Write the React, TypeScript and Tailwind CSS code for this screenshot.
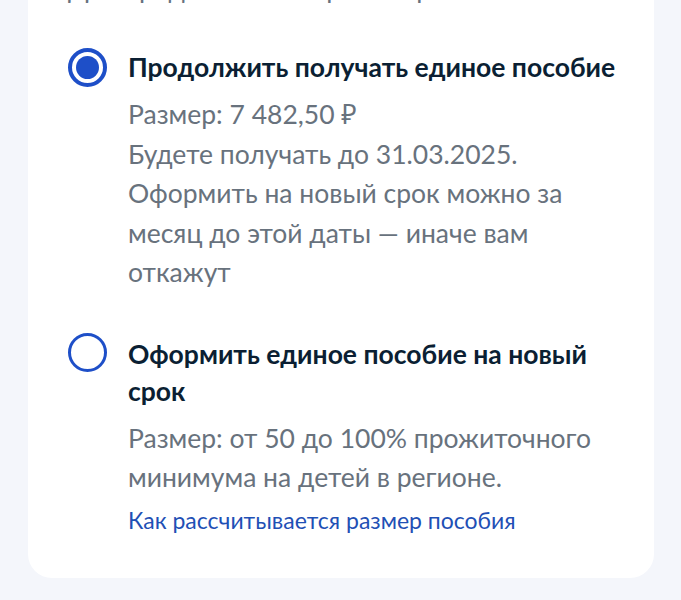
import React, { useState } from 'react';

type Option = {
  id: string;
  title: string;
  lines: string[];
  link?: string;
};

const options: Option[] = [
  {
    id: 'continue',
    title: 'Продолжить получать единое пособие',
    lines: [
      'Размер: 7 482,50 ₽',
      'Будете получать до 31.03.2025.',
      'Оформить на новый срок можно за месяц до этой даты — иначе вам откажут',
    ],
  },
  {
    id: 'new',
    title: 'Оформить единое пособие на новый срок',
    lines: ['Размер: от 50 до 100% прожиточного минимума на детей в регионе.'],
    link: 'Как рассчитывается размер пособия',
  },
];

function Radio({ checked }: { checked: boolean }) {
  return (
    <span
      className={`flex h-[39px] w-[39px] shrink-0 items-center justify-center rounded-full border-[#1e4fc8] ${
        checked ? '-mt-[1px] border-[4px]' : '-mt-[3px] border-[3px]'
      }`}
    >
      {checked && <span className="h-[23px] w-[23px] rounded-full bg-[#1e4fc8]" />}
    </span>
  );
}

export default function App() {
  const [selected, setSelected] = useState('continue');

  return (
    <div className="h-[600px] overflow-hidden bg-[#f4f6fb] font-['Lato','Noto_Sans',sans-serif]">
      <div className="mx-[28px] -mt-[40px] w-[626px] rounded-b-[24px] bg-white pb-[43px] pl-[40px] pr-[29px] pt-[10px]">
        <p className="text-[26.5px] leading-[36px] text-[#66727f]">Для продления выберите вариант</p>

        <div className="mt-[43px] flex flex-col gap-[43px]">
          {options.map((o) => (
            <button
              key={o.id}
              onClick={() => setSelected(o.id)}
              className="flex gap-[21px] text-left"
            >
              <Radio checked={selected === o.id} />
              <div className="flex-1">
                <div className="text-[26.5px] font-bold leading-[37px] text-[#0b1f33]">{o.title}</div>
                <div className="mt-[9px] text-[26.5px] leading-[39.5px] text-[#68727d]">
                  {o.lines.map((l) => (
                    <div key={l}>{l}</div>
                  ))}
                </div>
                {o.link && (
                  <div className="mt-[7px] text-[23px] leading-[30px] text-[#1f50b5]">{o.link}</div>
                )}
              </div>
            </button>
          ))}
        </div>
      </div>
    </div>
  );
}
